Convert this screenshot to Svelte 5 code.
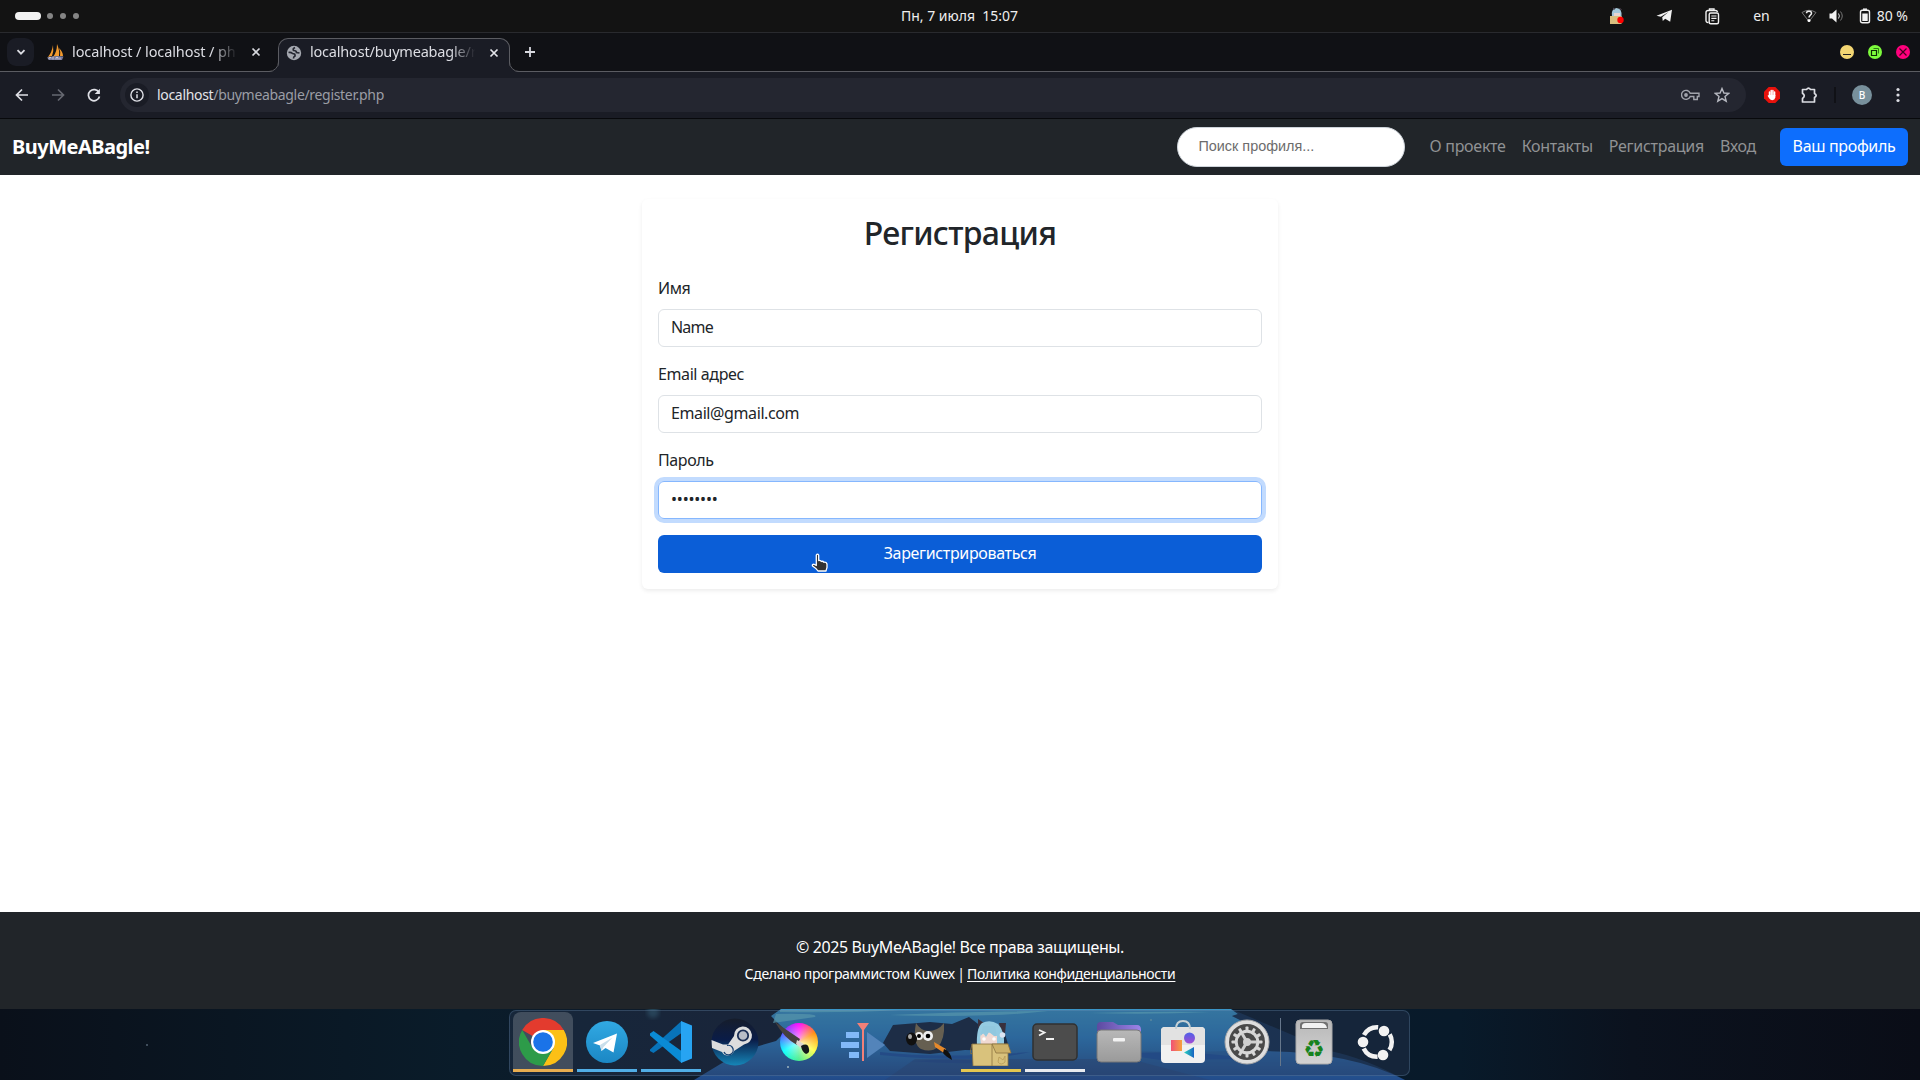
<script>
  const links = ['О проекте', 'Контакты', 'Регистрация', 'Вход'];
  const gearTeeth = Array.from({ length: 12 }, (_, i) => i * 30);
</script>

<div class="screen">
  <header class="topbar">
    <div class="spaces"><i class="pill"></i><i class="dot"></i><i class="dot"></i><i class="dot"></i></div>
    <div class="clock">Пн, 7 июля&nbsp; 15:07</div>
    <div class="tray">
      <svg class="t-girl" width="16" height="18" viewBox="0 0 16 18">
        <path d="M3 10Q1.500 2 7.500 1 13.500 1.500 12.500 10Z" fill="#a5c8da"/><rect x="5" y="6" width="6" height="4" fill="#e8d5cf"/>
        <rect x="1" y="9" width="11.500" height="8" fill="#d9be7e"/><path d="M4 1l2 1.500M12.500 2.500l-2-1" stroke="#56495a"/><circle cx="11.500" cy="13" r="3.200" fill="#f00"/>
      </svg>
      <svg class="t-tg" width="17" height="14" viewBox="0 0 17 14"><path d="M.5 6.800 16 .7 14.200 12.800 9.200 9.800 6.800 11.900 6.200 8.200 12.500 3 4.800 7.800Z" fill="#f2f2f2"/></svg>
      <svg class="t-clip" width="15" height="17" viewBox="0 0 15 17"><g fill="none" stroke="#f2f2f2" stroke-width="1.400"><path d="M3.500 14.500H3A2 2 0 0 1 1 12.500V4.500a2 2 0 0 1 2-2h7.500a2 2 0 0 1 2 1.500"/><rect x="4.200" y="5" width="9.300" height="10.800" rx="1.500"/><path d="M4.500 3V1h4.500v2"/><path d="M6.300 8h5.200M6.300 10.400h5.200M6.300 12.800h3" stroke-width="1.100"/></g></svg>
      <span class="lang">en</span>
      <svg class="t-wifi" width="16" height="14" viewBox="0 0 16 14"><path d="M1 3.500Q8-1 15 3.500L8 12.500Z" fill="none" stroke="#777"/><path d="M5.500 4.200C5.500 1.500 10.500 1.500 10.500 4.200 10.500 6.200 8 6 8 8.500" fill="none" stroke="#eee" stroke-width="1.500"/><circle cx="8" cy="11.500" r="1.500" fill="#fff"/></svg>
      <svg class="t-vol" width="16" height="14" viewBox="0 0 16 14"><path d="M.5 4.500H3L7.500.5V13.500L3 9.500H.5Z" fill="#f2f2f2"/><path d="M9.500 4.500q1.800 2.500 0 5" fill="none" stroke="#ddd"/><path d="M11.500 2.500q3.500 4.500 0 9" fill="none" stroke="#777"/></svg>
      <svg class="t-bat" width="12" height="16" viewBox="0 0 12 16"><path d="M4 1.200h4" stroke="#f2f2f2" stroke-width="1.500"/><rect x="1.500" y="2.200" width="9" height="12.500" rx="1.800" fill="none" stroke="#f2f2f2" stroke-width="1.400"/><rect x="3.300" y="5.500" width="5.400" height="7.500" fill="#f2f2f2"/></svg>
      <span class="pct">80 %</span>
    </div>
  </header>

  <div class="tabs">
    <div class="tabsearch"><svg width="12" height="12" viewBox="0 0 12 12"><path d="M2.500 4.200 6 7.700 9.500 4.200" fill="none" stroke="#dcdde3" stroke-width="1.800"/></svg></div>
    <div class="tab first">
      <svg width="17" height="17" viewBox="0 0 17 17"><path d="M6 1Q7 7 5 12L1 13Q5 8 6 1ZM10 0Q13 7 12 12L6 13Q10 8 10 0ZM12 4Q16 8 16 12L13 12Q14 8 12 4Z" fill="#f29a2e"/><path d="M0 13.500Q8 11 16.500 12.500L15 16H2Z" fill="#77799c"/><path d="M2 15.500v-2h2v1M6 15.500v-3M9 15.500v-2h2v2M13 15.500v-2" fill="none" stroke="#d6d6e4" stroke-width=".8"/></svg>
      <span class="tabtext">localhost / localhost / ph</span>
      <svg class="x" width="10" height="10" viewBox="0 0 10 10"><path d="M1.500 1.500l7 7M8.500 1.500l-7 7" stroke="#d8d9df" stroke-width="1.700"/></svg>
    </div>
    <div class="tab active">
      <svg class="edge left" width="10" height="34" viewBox="0 0 10 34"><path d="M0 34A10 10 0 0 0 10 24V34Z" fill="#1a1c25"/><path d="M0 33.500A9.500 9.500 0 0 0 9.500 24" fill="none" stroke="#5b5c62"/></svg>
      <svg class="edge right" width="10" height="34" viewBox="0 0 10 34"><path d="M10 34A10 10 0 0 1 0 24V34Z" fill="#1a1c25"/><path d="M10 33.500A9.500 9.500 0 0 1 .5 24" fill="none" stroke="#5b5c62"/></svg>
      <svg width="16" height="16" viewBox="0 0 16 16"><circle cx="8" cy="8" r="7.200" fill="#a5a8b0"/><path d="M2.500 7.500Q5 7 6.500 8.500 9.500 8.500 9 11 7.500 11.500 7.500 13.500M9 2.500Q6.500 3.500 7.500 5.500 10.500 5.500 10.500 7.500L13.500 8" fill="none" stroke="#252731" stroke-width="1.700"/></svg>
      <span class="tabtext second">localhost/buymeabagle/r</span>
      <svg class="x" width="10" height="10" viewBox="0 0 10 10"><path d="M1.500 1.500l7 7M8.500 1.500l-7 7" stroke="#e4e5ea" stroke-width="1.700"/></svg>
    </div>
    <svg class="plus" width="12" height="12" viewBox="0 0 12 12"><path d="M6 1v10M1 6h10" stroke="#d8d9df" stroke-width="1.800"/></svg>
    <div class="winbtns">
      <svg width="14" height="14" viewBox="0 0 14 14"><circle cx="7" cy="7" r="7" fill="#f3d673"/><path d="M3 9.500h8" stroke="#222"/></svg>
      <svg width="14" height="14" viewBox="0 0 14 14"><circle cx="7" cy="7" r="7" fill="#7dfb3c"/><path d="M3.500 5.500h5v5h-5z" fill="none" stroke="#0d2904" stroke-width="1.200"/><path d="M5.500 3.500h5v5" fill="none" stroke="#2f7a17"/></svg>
      <svg width="14" height="14" viewBox="0 0 14 14"><circle cx="7" cy="7" r="7" fill="#ff007c"/><path d="M3.500 3.500l7 7M10.500 3.500l-7 7" stroke="#42001f" stroke-width="1.200"/></svg>
    </div>
  </div>

  <div class="toolbar">
    <svg class="nav" width="14" height="14" viewBox="0 0 14 14"><path d="M13 7H2M7 1.500 1.500 7 7 12.500" fill="none" stroke="#dfe0e6" stroke-width="1.700"/></svg>
    <svg class="nav" width="14" height="14" viewBox="0 0 14 14"><path d="M1 7h11M7 1.500 12.500 7 7 12.500" fill="none" stroke="#666871" stroke-width="1.700"/></svg>
    <svg class="nav" width="14" height="14" viewBox="0 0 14 14"><path d="M12 4.500A5.600 5.600 0 1 0 12.500 8.500" fill="none" stroke="#dfe0e6" stroke-width="1.700"/><path d="M12.900.8V6H7.700Z" fill="#dfe0e6"/></svg>
    <div class="omnibox">
      <div class="info"><svg width="14" height="14" viewBox="0 0 14 14"><circle cx="7" cy="7" r="6.100" fill="none" stroke="#dfe0e6" stroke-width="1.400"/><path d="M7 6.200v4M7 3.500v1.500" stroke="#dfe0e6" stroke-width="1.500"/></svg></div>
      <span class="url"><b>localhost</b>/buymeabagle/register.php</span>
      <svg class="key" width="19" height="12" viewBox="0 0 19 12"><path d="M9.200 4.200A4.500 4.500 0 1 0 9.200 7.500H12.800V10.500H16.300V7.500H18V4.200Z" fill="none" stroke="#a2a4ac" stroke-width="1.400"/><circle cx="5" cy="6" r="1.900" fill="#a2a4ac"/></svg>
      <svg class="star" width="16" height="16" viewBox="0 0 16 16"><path d="M8 1.500 9.900 6 14.800 6.300 11 9.500 12.200 14.200 8 11.600 3.800 14.200 5 9.500 1.200 6.300 6.100 6Z" fill="none" stroke="#b6b8c0" stroke-width="1.400"/></svg>
    </div>
    <svg class="adblock" width="16" height="16" viewBox="0 0 16 16"><path d="M4.700 0h6.600L16 4.700v6.600L11.300 16H4.700L0 11.300V4.700Z" fill="#e8120c"/><path d="M5.500 9V5M7.200 8V3.500M8.900 8V3.500M10.600 9V5" stroke="#fff" stroke-width="1.500" stroke-linecap="round"/><path d="M4.900 8h6.400v2.500Q10.800 13 8.300 13.200 6.500 13.200 5.500 11.800L3.500 8.800 4.400 8.200Z" fill="#fff"/></svg>
    <svg class="ext" width="18" height="18" viewBox="0 0 18 18"><path d="M2.500 3.500H6.500Q8.500 .8 10.500 3.500H14.500V7.500Q17.800 9.500 14.500 11.500V16H2.500V12.500Q6 9.800 2.500 7.200Z" fill="none" stroke="#dcdde3" stroke-width="1.700" stroke-linejoin="round"/></svg>
    <i class="vsep"></i>
    <div class="avatar">В</div>
    <svg class="menu" width="4" height="16" viewBox="0 0 4 16"><g fill="#dcdde3"><circle cx="2" cy="2.500" r="1.600"/><circle cx="2" cy="8" r="1.600"/><circle cx="2" cy="13.500" r="1.600"/></g></svg>
  </div>

  <nav class="site">
    <div class="brand">BuyMeABagle!</div>
    <div class="search"><span>Поиск профиля...</span></div>
    <div class="links">
      {#each links as link}<span class="link">{link}</span>{/each}
    </div>
    <div class="btn profile"><span>Ваш профиль</span></div>
  </nav>

  <main>
    <section class="card">
      <h2>Регистрация</h2>
      <div class="label">Имя</div>
      <div class="field"><span class="f-name">Name</span></div>
      <div class="label">Email адрес</div>
      <div class="field"><span>Email@gmail.com</span></div>
      <div class="label">Пароль</div>
      <div class="field focus"><span class="f-pass">••••••••</span></div>
      <div class="btn submit"><span>Зарегистрироваться</span>
        <svg class="cursor" width="18" height="22" viewBox="0 0 18 22"><path d="M5.300 3Q6.500 1.200 7.700 3V8.500Q9.700 8 10.300 9.500 12 8.800 12.800 10.300 15.300 9.800 16 12V15.500Q15.500 17 15 19H7Q5.500 16.500 1.500 14 .8 12.200 3 12.200L5.300 13.500Z" fill="#333" stroke="#fff" stroke-width="1.300" stroke-linejoin="round"/></svg>
      </div>
    </section>
  </main>

  <footer>
    <p class="copy">© 2025 BuyMeABagle! Все права защищены.</p>
    <p class="made">Сделано программистом Kuwex <span class="bar">|</span> <u>Политика конфиденциальности</u></p>
  </footer>

  <div class="desk">
    <svg class="wall" width="1920" height="71" viewBox="0 0 1920 71">
      <defs>
        <linearGradient id="night"><stop offset="0" stop-color="#0a101a"/><stop offset=".24" stop-color="#0a1c2a"/><stop offset=".38" stop-color="#0e1a2a"/><stop offset=".76" stop-color="#081a2a"/><stop offset=".85" stop-color="#0b121e"/><stop offset="1" stop-color="#0a0d17"/></linearGradient>
        <linearGradient id="sea" x2="0" y2="1"><stop offset="0" stop-color="#3a95c6"/><stop offset=".4" stop-color="#2c7fc0"/><stop offset="1" stop-color="#224a88"/></linearGradient>
        <filter id="soft"><feGaussianBlur stdDeviation="2"/></filter>
      </defs>
      <rect width="1920" height="71" fill="url(#night)"/>
      <path d="M781 0H1231L1238 5 1232 7 1248 15 1258 42Q1350 42 1405 71H694L742 42 776 32 786 22 771 7Z" fill="url(#sea)"/>
      <path d="M1231 0 1238 5 1232 7 1248 15 1256 20V41Q1200 44 1120 42V71H1405Q1365 49 1330 42Z" fill="#24528e" opacity=".35"/>
      <path d="M776 5Q820 4 815 8L773 14ZM780 1H900Q850 4 780 3ZM890 6Q970 2 1048 2 990 9 890 6ZM1090 4Q1160 2 1210 3 1150 6 1090 4Z" fill="#6cc6d8" opacity=".7"/>
      <path d="M883 34 893 16 930 13 952 15 969 8 982 18 1005 25 1010 42 965 41 930 45 890 42Z" fill="#14253d"/>
      <path d="M880 43Q940 50 1030 43 980 55 880 46ZM910 52Q960 49 1010 53Q960 56 910 52ZM1120 45Q1190 40 1250 50L1160 51Z" fill="#1d4f9c" opacity=".8"/>
      <path d="M885 71 915 50H1130L1210 71Z" fill="#2a4472" opacity=".4"/>
      <circle cx="653" cy="3" r="6" fill="#356579" filter="url(#soft)" opacity=".6"/>
      <circle cx="788" cy="58" r="1" fill="#d9f5f5"/><circle cx="1151" cy="11" r="1" fill="#71afc3"/><circle cx="147" cy="36" r="1" fill="#526071"/>
    </svg>
    <div class="dock">
      <div class="app current run-orange">
        <svg width="48" height="48" viewBox="0 0 48 48"><path d="M24 24 3.200 12A24 24 0 0 1 44.800 12Z" fill="#e33b2e"/><path d="M24 24V12H44.800A24 24 0 0 1 24 48L34.400 30Z" fill="#fcc016"/><path d="M24 24 34.400 30 24 48A24 24 0 0 1 3.200 12L13.600 30Z" fill="#2d9b49"/><circle cx="24" cy="24" r="12" fill="#fff"/><circle cx="24" cy="24" r="9.800" fill="#1a73e8"/></svg>
      </div>
      <div class="app run-blue">
        <svg width="42" height="42" viewBox="0 0 42 42"><linearGradient id="tg" x2="0" y2="1"><stop stop-color="#31a9e3"/><stop offset="1" stop-color="#1b87c4"/></linearGradient><circle cx="21" cy="21" r="21" fill="url(#tg)"/><path d="M7 22 31 12.500 27.500 31.500 19.500 27 15.500 30 14 24.500Z" fill="#fff"/><path d="M14 24 26.500 16.500 17.500 26 15.500 30Z" fill="#c9dfeb"/></svg>
      </div>
      <div class="app run-blue">
        <svg width="42" height="42" viewBox="0 0 42 42"><path d="M0 28.500 31.500 0V12L3.500 32 0 30Z" fill="#0873b9"/><path d="M0 12.500 3.500 10 31.500 30V42L0 14.500Z" fill="#0a8bd5"/><path d="M31 0 42 4.500V37.500L31 42Z" fill="#27a4f2"/></svg>
      </div>
      <div class="app">
        <svg width="48" height="48" viewBox="0 0 48 48"><linearGradient id="st" x2="0" y2="1"><stop stop-color="#161d2b"/><stop offset=".45" stop-color="#0a1c48"/><stop offset="1" stop-color="#1686b8"/></linearGradient><circle cx="24" cy="24" r="23.500" fill="url(#st)"/><path d="M.5 22 12 26.500 17 26.500 23 18A9 9 0 1 1 33 26.500L23 33A6.500 6.500 0 0 1 11 34L1 30Z" fill="#ddd"/><circle cx="32" cy="17.500" r="5.200" fill="#b9bdc6" stroke="#1b2e54" stroke-width="1.800"/><path d="M13 34A4.800 4.800 0 1 0 16 27.500" fill="none" stroke="#164071" stroke-width="1.300"/></svg>
      </div>
      <div class="app"><div class="wheel"></div>
        <svg class="over" width="48" height="48" viewBox="0 0 48 48"><path d="M2 4 27 21 24 27Q11 20 2 4Z" fill="#45403f"/><path d="M24 22 31 26 28 30 23 26Z" fill="#ddd5cf"/><path d="M28 28Q35 24 36 31 37 35 33 36 29 34 28 28Z" fill="#15191b"/></svg>
      </div>
      <div class="app">
        <svg width="48" height="48" viewBox="0 0 48 48"><path d="M7 14H20V20H7ZM2 24H20V30H2ZM10 34H20V40H10Z" fill="#82b9f8"/><path d="M28 14 46 27 28 40Z" fill="#5384ba"/><path d="M18 5H30L25 12V43H23V12Z" fill="#f28078"/></svg>
      </div>
      <div class="app">
        <svg width="50" height="48" viewBox="0 0 50 48"><path d="M14 5Q18 12 26 13 36 13 42 5 43 21 36 29 29 35 19 31 10 26 14 5Z" fill="#665f51"/><circle cx="17" cy="18" r="4" fill="#eee"/><circle cx="26" cy="18" r="5" fill="#eee"/><circle cx="17" cy="18" r="2"/><circle cx="26" cy="18" r="2.300"/><ellipse cx="9.500" cy="21" rx="5.500" ry="6.500" fill="#101010"/><ellipse cx="8" cy="18.500" rx="2" ry="2.500" fill="#a8a8a8"/><path d="M32 24 44 31 42 35 33 29Z" fill="#e5892b"/><path d="M42 31Q49 34 50 42 43 38 41 35Z" fill="#101010"/></svg>
      </div>
      <div class="app run-yellow">
        <svg width="42" height="48" viewBox="0 0 42 48"><path d="M8 10 8 1 14 5ZM29 5 36 5 35 16 31 16Z" fill="#39303d"/><path d="M7 28Q6 10 12 5 20 1 28 6 35 13 34 28Z" fill="#94cbe2"/><path d="M10 17Q19 12 27 17V27H11Z" fill="#f0d9d2"/><path d="M10 19 13 15 16 19 19 14 24 18 27 18 25 8H13Z" fill="#91c8df"/><circle cx="14" cy="21" r="1.800" fill="#fff"/><circle cx="24" cy="21" r="1.800" fill="#fff"/><circle cx="32.500" cy="17" r="2.800" fill="#dce5f3"/><path d="M2 26H38V48H3Z" fill="#d9c27c" stroke="#8d7340" stroke-width=".8"/><path d="M22 26 26 35H41L38 26Z" fill="#cdb26a" stroke="#8d7340" stroke-width=".8"/><path d="M22 26V48M2 26 0 35 3 36" fill="none" stroke="#8d7340" stroke-width=".8"/><path d="M29 39l4 3 2-4v6q-4 4-7 0Z" fill="none" stroke="#b89a55" stroke-width=".8"/></svg>
      </div>
      <div class="app run-white">
        <svg width="46" height="38" viewBox="0 0 46 38"><rect x="1" y="1" width="44" height="36" rx="4" fill="#4c4c4c" stroke="#303030" stroke-width="1.500"/><path d="M7 7 12.500 9.500 7 12.500M14 16H22" fill="none" stroke="#f2f2f2" stroke-width="1.800"/></svg>
      </div>
      <div class="app">
        <svg width="46" height="42" viewBox="0 0 46 42"><linearGradient id="fp"><stop stop-color="#5c4aa0"/><stop offset="1" stop-color="#9c84e8"/></linearGradient><path d="M1 15V5Q1 1 5 1H17L22 4H41Q45 4 45 9V15Z" fill="url(#fp)"/><linearGradient id="fo" x2="0" y2="1"><stop stop-color="#b8b8b8"/><stop offset="1" stop-color="#9a9a9a"/></linearGradient><rect x="1" y="9" width="44" height="32" rx="4" fill="url(#fo)" stroke="#777"/><rect x="17" y="17" width="12" height="3.500" rx="1" fill="#f2f2f2"/></svg>
      </div>
      <div class="app">
        <svg width="46" height="46" viewBox="0 0 46 46"><linearGradient id="pu" x2="0" y2="1"><stop stop-color="#4e61e8"/><stop offset="1" stop-color="#a34bd2"/></linearGradient><linearGradient id="re"><stop stop-color="#f05176"/><stop offset="1" stop-color="#f7a13d"/></linearGradient><linearGradient id="cy"><stop stop-color="#29d5bd"/><stop offset="1" stop-color="#1963c2"/></linearGradient><rect x="1" y="8" width="44" height="36" rx="4" fill="#f1f1f1"/><path d="M1 12Q1 8 5 8H41Q45 8 45 12V26H1Z" fill="#e2e2e2"/><path d="M16 10Q16 2 23 2T30 10" fill="none" stroke="#c6d1d5" stroke-width="2"/><rect x="11" y="21" width="11" height="11" fill="url(#re)"/><circle cx="29.500" cy="19" r="5.500" fill="url(#pu)"/><path d="M34 28V39L24 33.500Z" fill="url(#cy)"/></svg>
      </div>
      <div class="app">
        <svg width="46" height="46" viewBox="0 0 46 46"><circle cx="23" cy="23" r="22" fill="#dedede" stroke="#aaa"/><circle cx="23" cy="23" r="18" fill="#4a4a4a"/><g fill="#d7d7d7">{#each gearTeeth as angle}<rect x="21.500" y="7.500" width="3" height="5" rx=".8" transform="rotate({angle} 23 23)"/>{/each}</g><circle cx="23" cy="23" r="10.800" fill="none" stroke="#d7d7d7" stroke-width="3"/><circle cx="23" cy="23" r="4" fill="#d0d0d0"/><path d="M23 23H33M23 23 18 14.500M23 23 18 31.500" stroke="#d0d0d0" stroke-width="3"/></svg>
      </div>
      <i class="dsep"></i>
      <div class="app trash">
        <svg width="38" height="46" viewBox="0 0 38 46"><linearGradient id="tr" x2="0" y2="1"><stop stop-color="#b8b8b8"/><stop offset="1" stop-color="#d3d3d3"/></linearGradient><rect x="1" y="1" width="36" height="44" rx="4" fill="url(#tr)" stroke="#aaa"/><path d="M5 10V6Q5 3 8 3H30Q33 3 33 6V10Z" fill="#707070"/><path d="M7 9Q6 4 11 4H26Q31 4 32 9Z" fill="#f2f2f2"/><text x="19" y="38" text-anchor="middle" class="recycle">♻</text></svg>
      </div>
      <div class="app ubuntu">
        <svg width="38" height="38" viewBox="0 0 38 38"><circle cx="20" cy="19" r="14.800" fill="none" stroke="#f2f2f2" stroke-width="4.500" stroke-dasharray="17 14" stroke-dashoffset="8.500"/><g fill="#f2f2f2"><circle cx="6" cy="19" r="5.300"/><circle cx="27" cy="8" r="5.300"/><circle cx="26" cy="32" r="5.300"/></g></svg>
      </div>
    </div>
  </div>
</div>

<style>
  :global(body) { margin: 0; background: #fff; overflow: hidden; }
  .screen { width: 1920px; height: 1080px; display: flex; flex-direction: column; font-family: "Noto Sans", "Open Sans", sans-serif; color: #212529; overflow: hidden; }
  .screen :global(svg) { display: block; flex: none; }
  .screen > * { box-sizing: border-box; flex: none; }
  span, .label, .brand, .clock { white-space: nowrap; }
  i { display: block; flex: none; }

  .topbar { height: 33px; background: #131313; border-bottom: 1px solid #292a2e; display: grid; grid-template-columns: 1fr auto 1fr; align-items: center; color: #eee; font-size: 14px; }
  .spaces { display: flex; align-items: center; gap: 7px; padding-left: 15px; }
  .pill { width: 26px; height: 8px; border-radius: 4px; background: #f2f2f2; margin-right: -1px; }
  .dot { width: 6px; height: 6px; border-radius: 50%; background: #858585; }
  .clock, .lang, .pct { padding-bottom: 2px; }
  .clock { padding-right: 1px; }
  .tray { display: flex; align-items: center; justify-content: flex-end; padding-right: 12px; }
  .t-tg { margin-left: 31px; }
  .t-clip { margin-left: 32px; }
  .lang { margin-left: 33px; }
  .t-wifi { margin-left: 31px; }
  .t-vol { margin-left: 12px; }
  .t-bat { margin-left: 14px; }
  .pct { margin-left: 6px; }

  .tabs { height: 39px; background: #101115; border-bottom: 1px solid #5b5c62; display: flex; padding: 5px 10px 0 7px; }
  .tabsearch { width: 27px; height: 28px; border-radius: 9px; background: #1a1c25; display: grid; place-items: center; }
  .tab { height: 28px; display: flex; align-items: center; color: #dcdde3; font-size: 14.500px; }
  .first { margin-left: 13px; width: 231px; }
  .tabtext { width: 167px; margin-left: 8px; padding-bottom: 2px; letter-spacing: -.1px; mask-image: linear-gradient(to right, #000 84%, transparent 99%); }
  .second { letter-spacing: -.2px; padding-bottom: 3px; }
  .x { margin-left: 12px; }
  .active { position: relative; box-sizing: border-box; width: 232px; height: 34px; padding: 0 10px 6px 7px; background: #1a1c25; border: 1px solid #5b5c62; border-bottom: 0; border-radius: 10px 10px 0 0; }
  .edge { position: absolute; top: -1px; }
  .left { left: -10px; }
  .right { right: -10px; }
  .plus { margin: 8px 0 0 14px; }
  .winbtns { display: flex; gap: 14px; margin: 7px 0 0 auto; }

  .toolbar { height: 47px; background: #1a1c25; border-bottom: 1px solid #08090c; display: flex; align-items: center; padding: 0 20px 0 15px; }
  .nav { margin-right: 22px; }
  .omnibox { margin-left: -3px; width: 1626px; height: 34px; border-radius: 17px; background: #242630; display: flex; align-items: center; box-sizing: border-box; padding: 0 16px 0 5px; }
  .info { width: 24px; height: 24px; border-radius: 50%; background: #1a1c25; display: grid; place-items: center; }
  .url { margin-left: 8px; padding-bottom: 2px; color: #9b9da5; font-size: 14px; letter-spacing: -.32px; }
  .url b { color: #e3e4e9; font-weight: 400; }
  .key { margin-left: auto; }
  .star { margin-left: 14px; }
  .adblock { margin-left: 18px; }
  .ext { margin-left: 20px; }
  .vsep { width: 2px; height: 16px; background: #101116; margin-left: 16px; }
  .avatar { width: 20px; height: 20px; border-radius: 50%; background: #78909c; color: #fff; display: grid; place-items: center; font-size: 10px; line-height: 18px; font-weight: 500; margin-left: 16px; }
  .menu { margin-left: auto; }

  .site { height: 56px; background: #212529; display: flex; align-items: center; padding: 0 12px; }
  .brand { color: #fff; font-size: 20px; font-weight: 700; letter-spacing: -.52px; padding-bottom: 2px; }
  .search { margin-left: auto; box-sizing: border-box; width: 228px; height: 40px; border: 1px solid #ced4da; border-radius: 20px; background: #fff; padding: 0 0 2px 20px; display: flex; align-items: center; color: #6c6c6c; font: 14.400px "Liberation Sans", sans-serif; }
  .links { display: flex; margin-left: 16px; padding-bottom: 2px; }
  .link { padding: 0 8px; color: #909294; font-size: 16px; letter-spacing: -.28px; }
  .btn { box-sizing: border-box; height: 38px; border-radius: 6px; display: flex; align-items: center; justify-content: center; padding-bottom: 2px; color: #fff; font-size: 16px; letter-spacing: -.34px; }
  .profile { width: 128px; margin-left: 16px; background: #0d6efd; }

  main { height: 737px; background: #fff; padding-top: 24px; }
  .card { box-sizing: border-box; width: 636px; height: 390px; margin: 0 auto; padding: 16px; border-radius: 6px; box-shadow: 0 2px 4px rgba(0, 0, 0, .075); }
  h2 { margin: 0 0 24px; height: 38px; line-height: 36px; font-size: 32px; font-weight: 500; letter-spacing: -.68px; text-align: center; }
  .label { height: 24px; line-height: 22px; font-size: 16px; letter-spacing: -.4px; margin-bottom: 8px; }
  .field { box-sizing: border-box; height: 38px; border: 1px solid #dee2e6; border-radius: 6px; padding: 0 12px 2px; margin-bottom: 16px; display: flex; align-items: center; font-size: 16px; letter-spacing: -.4px; }
  .f-name { letter-spacing: -.8px; }
  .f-pass { letter-spacing: -.2px; }
  .focus { border-color: #86b7fe; box-shadow: 0 0 0 4px #c2dbfe; }
  .submit { position: relative; background: #0b5ed7; }
  .cursor { position: absolute; left: 153px; top: 17px; }

  footer { height: 97px; background: #212529; color: #fff; text-align: center; padding-top: 23px; }
  p { margin: 0; }
  .copy { font-size: 16px; line-height: 24px; letter-spacing: -.39px; }
  .made { font-size: 14px; line-height: 21px; margin-top: 4px; letter-spacing: -.32px; }
  .bar { margin: 0 -1px; }
  u { text-underline-offset: 2px; }

  .desk { position: relative; height: 71px; display: flex; justify-content: center; align-items: flex-start; }
  .wall { position: absolute; inset: 0; }
  .dock { position: relative; box-sizing: border-box; width: 901px; height: 66px; margin: 1px 1px 0 0; border: 1px solid rgba(120, 155, 195, .28); border-radius: 7px; background: rgba(45, 60, 90, .35); padding: 1px 3px; display: flex; gap: 4px; }
  .app { position: relative; box-sizing: border-box; flex: none; width: 60px; height: 60px; display: grid; place-items: center; border-radius: 8px; }
  .current { background: rgba(120, 130, 140, .43); }
  .run-orange { border-bottom: 3px solid #e8ad50; }
  .run-blue { border-bottom: 3px solid #51aee6; }
  .run-yellow { border-bottom: 3px solid #e4c650; }
  .run-white { border-bottom: 3px solid #e9ebef; }
  .run-orange, .run-blue, .run-yellow, .run-white { border-radius: 8px 8px 0 0; padding-top: 2px; }
  .wheel { width: 38px; height: 38px; border-radius: 50%; background: radial-gradient(circle, rgba(255, 255, 255, .65), transparent 75%), conic-gradient(#f0f, #f80, #ff4, #4e8, #0ff, #54f, #f0f); }
  .over { position: absolute; left: 4px; top: 6px; }
  .dsep { width: 1px; height: 48px; background: #66778b; margin: 6px -2px 0 -1px; }
  .trash { margin-left: 1px; }
  .ubuntu { margin-left: -2px; }
  .recycle { font: 24px "DejaVu Sans", sans-serif; fill: #16831d; }
</style>
